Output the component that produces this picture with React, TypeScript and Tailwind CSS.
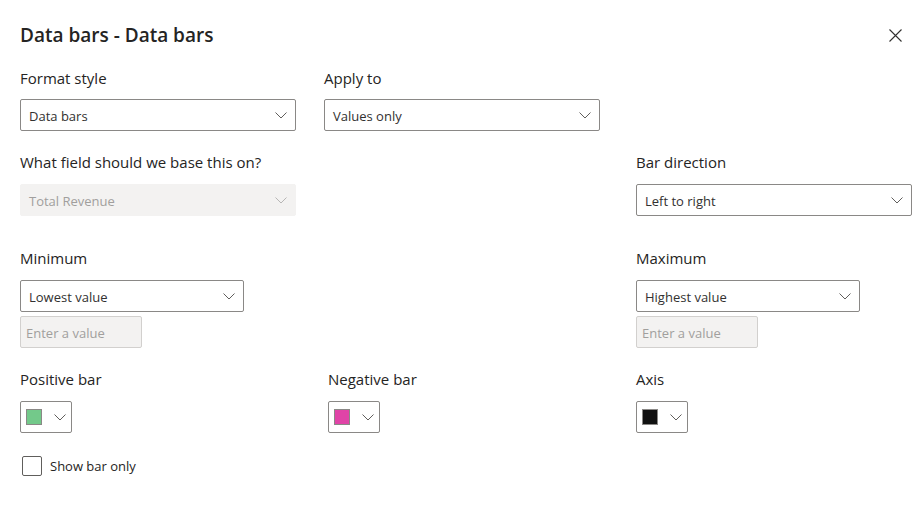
import React from "react";

const font = { fontFamily: '"Open Sans", "Noto Sans", sans-serif' };

function Chevron() {
  return (
    <svg width="12" height="7" viewBox="0 0 12 7" fill="none">
      <path d="M0.5 0.5 L6 6 L11.5 0.5" stroke="#605e5c" strokeWidth="1" />
    </svg>
  );
}

function Select({ value, width, disabled }: { value: string; width: string; disabled?: boolean }) {
  return (
    <div
      className={`${width} h-[32px] flex items-center justify-between pl-[8px] pr-[8px] rounded-[2px] border ${
        disabled ? "bg-[#f3f2f1] border-[#f3f2f1] text-[#a19f9d]" : "bg-white border-[#8a8886] text-[#323130]"
      } text-[13px]`}
    >
      <span className="pt-[3px]">{value}</span>
      <span className={disabled ? "opacity-40" : ""}>
        <Chevron />
      </span>
    </div>
  );
}

function Label({ children }: { children: React.ReactNode }) {
  return <div className="h-[20px] leading-[20px] text-[15px] text-[#252423]">{children}</div>;
}

function ValueInput() {
  return (
    <div className="mt-[4px] w-[122px] h-[32px] flex items-center pl-[5px] pt-[3px] rounded-[2px] border border-[#d2d0ce] bg-[#f3f2f1] text-[13px] text-[#a19f9d]">
      Enter a value
    </div>
  );
}

function ColorPick({ color }: { color: string }) {
  return (
    <div className="w-[52px] h-[32px] flex items-center pl-[5px] pr-[5px] justify-between rounded-[2px] border border-[#8a8886] bg-white">
      <div className="w-[16px] h-[16px] border border-[#8a8886]" style={{ backgroundColor: color }} />
      <Chevron />
    </div>
  );
}

export default function App() {
  return (
    <div className="w-[923px] h-[522px] bg-white overflow-hidden" style={font}>
      <div className="pl-[20px] pt-[22px]">
        <div className="flex items-center justify-between pr-[20px] h-[26px]">
          <div className="text-[19px] font-semibold text-[#252423] leading-[26px]">Data bars - Data bars</div>
          <svg width="13" height="13" viewBox="0 0 13 13" className="mr-[1px]">
            <path d="M0.5 0.5 L12.5 12.5 M12.5 0.5 L0.5 12.5" stroke="#323130" strokeWidth="1.1" />
          </svg>
        </div>

        <div className="flex mt-[20px]">
          <div className="w-[304px]">
            <Label>Format style</Label>
            <div className="mt-[11px]">
              <Select value="Data bars" width="w-[276px]" />
            </div>
          </div>
          <div className="w-[312px]">
            <Label>Apply to</Label>
            <div className="mt-[11px]">
              <Select value="Values only" width="w-[276px]" />
            </div>
          </div>
        </div>

        <div className="flex mt-[21px]">
          <div className="w-[616px]">
            <Label>What field should we base this on?</Label>
            <div className="mt-[12px]">
              <Select value="Total Revenue" width="w-[276px]" disabled />
            </div>
          </div>
          <div>
            <Label>Bar direction</Label>
            <div className="mt-[12px]">
              <Select value="Left to right" width="w-[276px]" />
            </div>
          </div>
        </div>

        <div className="flex mt-[32px]">
          <div className="w-[616px]">
            <Label>Minimum</Label>
            <div className="mt-[12px]">
              <Select value="Lowest value" width="w-[224px]" />
            </div>
            <ValueInput />
          </div>
          <div>
            <Label>Maximum</Label>
            <div className="mt-[12px]">
              <Select value="Highest value" width="w-[224px]" />
            </div>
            <ValueInput />
          </div>
        </div>

        <div className="flex mt-[21px]">
          <div className="w-[308px]">
            <Label>Positive bar</Label>
            <div className="mt-[12px]">
              <ColorPick color="#73c98a" />
            </div>
          </div>
          <div className="w-[308px]">
            <Label>Negative bar</Label>
            <div className="mt-[12px]">
              <ColorPick color="#e044a7" />
            </div>
          </div>
          <div>
            <Label>Axis</Label>
            <div className="mt-[12px]">
              <ColorPick color="#111111" />
            </div>
          </div>
        </div>

        <div className="flex items-center mt-[22px] ml-[2px]">
          <div className="w-[20px] h-[20px] rounded-[2px] border border-[#605e5c] bg-white" />
          <span className="ml-[8px] pt-[2px] text-[13px] text-[#252423]">Show bar only</span>
        </div>
      </div>
    </div>
  );
}
